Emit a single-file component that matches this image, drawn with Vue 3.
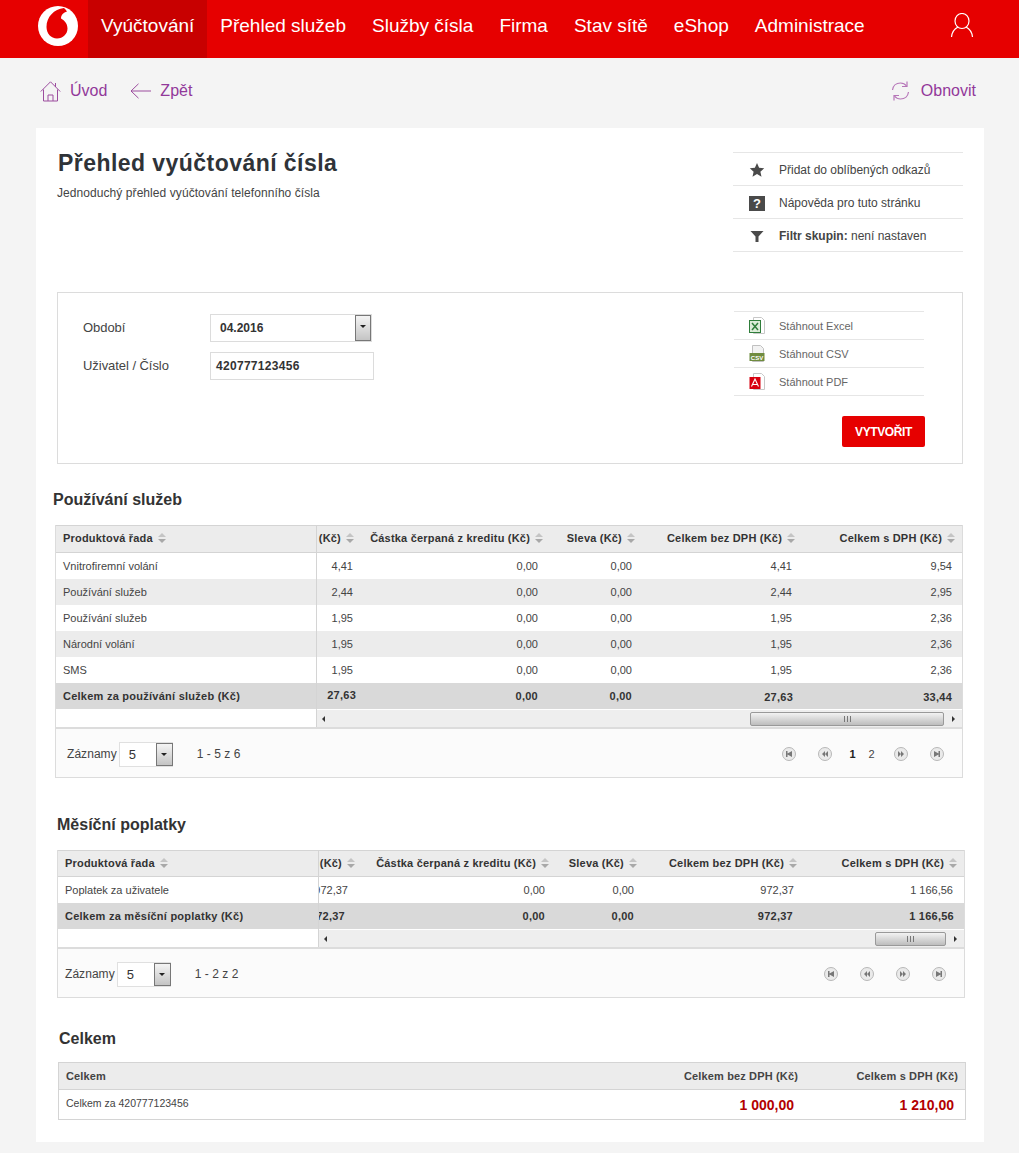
<template>
  <div class="page">
    <header class="topbar">
      <div class="logo">
        <svg width="42" height="42" viewBox="0 0 42 42">
          <circle cx="21" cy="21" r="20" fill="#fff" />
          <path d="M27 3C17 4 9.500 12 9.500 22c0 6.500 4.500 11.500 10.500 11.500S30.500 29 30.500 23.500c0-6-4.500-9-6.500-10 0-3.500 2.500-6 6-7-1-1.500-2-2.700-3-3.500z" fill="#e60000" />
        </svg>
      </div>
      <nav class="menu">
        <a v-for="item in menu" :key="item" class="menu-item" :class="{ active: item === 'Vyúčtování' }">{{ item }}</a>
      </nav>
      <svg class="user" width="24" height="26" viewBox="0 0 24 26" fill="none" stroke="#fff" stroke-width="1.2">
        <ellipse cx="12" cy="8" rx="7" ry="7.500" />
        <path d="M1.500 24c.5-5 3.500-8.500 6.500-10M22.500 24c-.5-5-3.500-8.500-6.500-10" />
      </svg>
    </header>

    <div class="toolbar">
      <a class="tool">
        <svg width="21" height="21" viewBox="0 0 21 21" fill="none" stroke="#9c4d9e" stroke-width="1">
          <path d="M.8 10.500 10.500 .8l9.700 9.700M3.500 8.500v11.500h14V8.500M15.500 2v4M8 20v-6h5v6" />
        </svg>
        Úvod
      </a>
      <a class="tool">
        <svg width="21" height="16" viewBox="0 0 21 16" fill="none" stroke="#9c4d9e" stroke-width="1">
          <path d="M8.500 .8 1 8l7.500 7.200M1 8h20" />
        </svg>
        Zpět
      </a>
      <a class="tool right">
        <svg width="19" height="20" viewBox="0 0 19 20" fill="none" stroke="#b676b8" stroke-width="1.200">
          <path d="M1.500 9C2 5 5 2 9.500 2c2.500 0 4.500 1 6 3M17.500 11c-.5 4-3.500 7-8 7-2.500 0-4.500-1-6-3" />
          <path d="M16 .5v5h-5M3 19.500v-5h5" />
        </svg>
        Obnovit
      </a>
    </div>

    <main class="card">
      <div class="head">
        <div>
          <h1>Přehled vyúčtování čísla</h1>
          <p class="sub">Jednoduchý přehled vyúčtování telefonního čísla</p>
        </div>
        <ul class="links">
          <li>
            <svg width="16" height="16" viewBox="0 0 16 16"><path d="M8 1l2.100 4.800 5.100.5-3.800 3.400 1.100 5.100L8 12.100l-4.500 2.700 1.100-5.100L.8 6.300l5.100-.5z" fill="#4a4a4a" /></svg>
            <span>Přidat do oblíbených odkazů</span>
          </li>
          <li>
            <span class="q">?</span>
            <span>Nápověda pro tuto stránku</span>
          </li>
          <li>
            <svg width="16" height="16" viewBox="0 0 16 16"><path d="M1.500 3h13L9.500 8.500V14h-3V8.500z" fill="#4a4a4a" /></svg>
            <span><b>Filtr skupin:</b> není nastaven</span>
          </li>
        </ul>
      </div>

      <section class="filter">
        <div class="fields">
          <div class="field">
            <label>Období</label>
            <div class="select period">
              <span>04.2016</span>
              <i class="drop"></i>
            </div>
          </div>
          <div class="field">
            <label>Uživatel / Číslo</label>
            <div class="input">420777123456</div>
          </div>
        </div>
        <div class="downloads">
          <ul>
            <li>
              <svg width="16" height="18" viewBox="0 0 16 18">
                <path d="M4.500 .5h8l3 3v13h-11z" fill="#fff" stroke="#c8c8c8" />
                <rect x=".5" y="3.500" width="11" height="12" fill="#dcecd8" stroke="#2f7d3a" />
                <path d="M3 6l6 7M9 6l-6 7" stroke="#2f7d3a" stroke-width="1.500" />
              </svg>
              <span>Stáhnout Excel</span>
            </li>
            <li>
              <svg width="16" height="18" viewBox="0 0 16 18">
                <path d="M3.500 .5h8l3 3v13h-11z" fill="#f2f2f2" stroke="#c0c0c0" />
                <rect x=".5" y="8" width="15" height="8" fill="#6f8b3f" />
                <text x="8" y="14.500" text-anchor="middle" class="mark">CSV</text>
              </svg>
              <span>Stáhnout CSV</span>
            </li>
            <li>
              <svg width="16" height="18" viewBox="0 0 16 18">
                <path d="M4.500 .5h8l3 3v13h-11z" fill="#fff" stroke="#c8c8c8" />
                <rect x=".5" y="4" width="11" height="12" fill="#d7000f" />
                <path d="M2.500 13.500 6 6l3.500 7.500M4 11.500h4" fill="none" stroke="#fff" stroke-width="1.100" />
              </svg>
              <span>Stáhnout PDF</span>
            </li>
          </ul>
          <button class="create">VYTVOŘIT</button>
        </div>
      </section>

      <h2 class="h-usage">Používání služeb</h2>
      <div class="grid-box usage">
        <div class="grid">
          <div class="frozen">
            <div class="row hdr"><span class="txt">Produktová řada</span><i class="sort"></i></div>
            <div v-for="(r, i) in usage" :key="i" class="row" :class="{ alt: i % 2 === 1 }">{{ r.name }}</div>
            <div class="row total">Celkem za používání služeb (Kč)</div>
            <div class="pad"></div>
          </div>
          <div class="scroll">
            <div class="row hdr">
              <div v-for="c in usageCols" :key="c.t" class="cell" :style="{ width: c.w + 'px', paddingRight: c.hp + 'px' }">
                <span class="txt">{{ c.t }}</span><i class="sort"></i>
              </div>
            </div>
            <div v-for="(r, i) in usage" :key="i" class="row" :class="{ alt: i % 2 === 1 }">
              <div v-for="(v, j) in r.vals" :key="j" class="cell" :style="{ width: usageCols[j].w + 'px', paddingRight: usageCols[j].vp + 'px' }">{{ v }}</div>
            </div>
            <div class="row total">
              <div v-for="(v, j) in usageTotal" :key="j" class="cell" :style="{ width: usageCols[j].w + 'px', paddingRight: usageCols[j].tp + 'px', marginTop: usageCols[j].ty + 'px' }">{{ v }}</div>
            </div>
            <div class="hbar">
              <i class="arr left"></i>
              <div class="track"><div class="thumb" style="width: 194px"><em></em></div></div>
              <i class="arr rgt"></i>
            </div>
          </div>
        </div>
        <div class="pager">
          <span class="lbl">Záznamy</span>
          <div class="select small"><span>5</span><i class="drop"></i></div>
          <span class="count">1 - 5 z 6</span>
          <div class="pages">
            <span class="pg first"></span>
            <span class="pg prev"></span>
            <span class="num cur">1</span>
            <span class="num">2</span>
            <span class="pg next"></span>
            <span class="pg last"></span>
          </div>
        </div>
      </div>

      <h2 class="h-fees">Měsíční poplatky</h2>
      <div class="grid-box fees">
        <div class="grid">
          <div class="frozen">
            <div class="row hdr"><span class="txt">Produktová řada</span><i class="sort"></i></div>
            <div class="row">Poplatek za uživatele</div>
            <div class="row total">Celkem za měsíční poplatky (Kč)</div>
            <div class="pad"></div>
          </div>
          <div class="scroll">
            <div class="row hdr">
              <div v-for="c in feeCols" :key="c.t" class="cell" :style="{ width: c.w + 'px', paddingRight: c.hp + 'px' }">
                <span class="txt">{{ c.t }}</span><i class="sort"></i>
              </div>
            </div>
            <div class="row">
              <div v-for="(v, j) in feeRow" :key="j" class="cell" :style="{ width: feeCols[j].w + 'px', paddingRight: feeCols[j].vp + 'px' }">{{ v }}</div>
            </div>
            <div class="row total">
              <div v-for="(v, j) in feeRow" :key="j" class="cell" :style="{ width: feeCols[j].w + 'px', paddingRight: feeCols[j].tp + 'px' }">{{ v }}</div>
            </div>
            <div class="hbar">
              <i class="arr left"></i>
              <div class="track"><div class="thumb" style="width: 71px"><em></em></div></div>
              <i class="arr rgt"></i>
            </div>
          </div>
        </div>
        <div class="pager">
          <span class="lbl">Záznamy</span>
          <div class="select small"><span>5</span><i class="drop"></i></div>
          <span class="count">1 - 2 z 2</span>
          <div class="pages">
            <span class="pg first"></span>
            <span class="pg prev"></span>
            <span class="pg next"></span>
            <span class="pg last"></span>
          </div>
        </div>
      </div>

      <h2 class="h-sum">Celkem</h2>
      <div class="sum">
        <div class="sum-row sum-hdr">
          <span class="s1">Celkem</span>
          <span class="s2">Celkem bez DPH (Kč)</span>
          <span class="s3">Celkem s DPH (Kč)</span>
        </div>
        <div class="sum-row sum-val">
          <span class="s1 name">Celkem za 420777123456</span>
          <span class="s2 price">1 000,00</span>
          <span class="s3 price">1 210,00</span>
        </div>
      </div>
    </main>
  </div>
</template>

<script setup>
const menu = ['Vyúčtování', 'Přehled služeb', 'Služby čísla', 'Firma', 'Stav sítě', 'eShop', 'Administrace']

const titles = ['(Kč)', 'Částka čerpaná z kreditu (Kč)', 'Sleva (Kč)', 'Celkem bez DPH (Kč)', 'Celkem s DPH (Kč)']

// šířky sloupců a odsazení hlavičky / hodnot / součtu
const usageCols = [
  { w: 46, hp: 8, vp: 10, tp: 7, ty: -2 },
  { w: 186, hp: 5, vp: 11, tp: 11, ty: 0 },
  { w: 94, hp: 7, vp: 11, tp: 11, ty: 0 },
  { w: 160, hp: 7, vp: 11, tp: 10, ty: 2 },
  { w: 160, hp: 7, vp: 11, tp: 11, ty: 2 }
].map((c, i) => ({ ...c, t: titles[i] }))

const feeCols = [
  { w: 40, hp: 3, vp: 11, tp: 14 },
  { w: 197, hp: 6, vp: 11, tp: 11 },
  { w: 89, hp: 7, vp: 11, tp: 11 },
  { w: 160, hp: 7, vp: 11, tp: 12 },
  { w: 159, hp: 6, vp: 11, tp: 10 }
].map((c, i) => ({ ...c, t: titles[i] }))

const usage = [
  { name: 'Vnitrofiremní volání', vals: ['4,41', '0,00', '0,00', '4,41', '9,54'] },
  { name: 'Používání služeb', vals: ['2,44', '0,00', '0,00', '2,44', '2,95'] },
  { name: 'Používání služeb', vals: ['1,95', '0,00', '0,00', '1,95', '2,36'] },
  { name: 'Národní volání', vals: ['1,95', '0,00', '0,00', '1,95', '2,36'] },
  { name: 'SMS', vals: ['1,95', '0,00', '0,00', '1,95', '2,36'] }
]
const usageTotal = ['27,63', '0,00', '0,00', '27,63', '33,44']
const feeRow = ['972,37', '0,00', '0,00', '972,37', '1 166,56']
</script>

<style>
body {
  background: #f4f4f4;
}
</style>

<style scoped>
.page {
  width: 1019px;
  height: 1153px;
  overflow: hidden;
  background: #f4f4f4;
  font-family: "Liberation Sans", Arial, sans-serif;
  color: #333;
}

/* horní lišta */
.topbar {
  height: 58px;
  background: #e60000;
  display: flex;
  align-items: center;
  position: relative;
}
.logo {
  width: 88px;
  padding-left: 37px;
  box-sizing: border-box;
  display: flex;
  margin-top: -6px;
}
.menu {
  display: flex;
  height: 58px;
}
.menu-item {
  padding: 0 13px;
  line-height: 51px;
  font-size: 19px;
  color: #fff;
}
.menu-item.active {
  background: #c80000;
}
.user {
  margin-left: auto;
  margin-right: 45px;
  margin-top: -7px;
}

/* nástroje */
.toolbar {
  height: 70px;
  display: flex;
  align-items: center;
  padding: 0 43px 4px 40px;
  box-sizing: border-box;
  gap: 23px;
}
.tool {
  display: flex;
  align-items: center;
  gap: 9px;
  color: #92399a;
  font-size: 16px;
}
.tool.right {
  margin-left: auto;
  gap: 11px;
}

.card {
  width: 948px;
  height: 1014px;
  margin-left: 36px;
  background: #fff;
  padding: 0 21px;
  box-sizing: border-box;
}

.head {
  display: flex;
  justify-content: space-between;
  padding-top: 23px;
  height: 164px;
  box-sizing: border-box;
}
h1 {
  margin: 0;
  padding-left: 1px;
  font-size: 23px;
  line-height: 24px;
  letter-spacing: 0.45px;
  color: #2f3338;
}
.sub {
  margin: 11px 0 0;
  font-size: 12px;
  letter-spacing: 0.07px;
  color: #444;
}
.links {
  list-style: none;
  margin: 1px 0 0;
  padding: 0;
  width: 230px;
  border-top: 1px solid #e6e6e6;
  height: 100px;
}
.links li {
  height: 33px;
  box-sizing: border-box;
  border-bottom: 1px solid #e6e6e6;
  display: flex;
  align-items: center;
  padding: 2px 0 0 16px;
  gap: 14px;
  font-size: 12px;
  color: #444;
}
.links svg {
  flex: none;
}
.q {
  width: 16px;
  height: 15px;
  background: #4a4a4a;
  color: #fff;
  font-weight: bold;
  font-size: 13px;
  line-height: 15px;
  text-align: center;
}

.filter {
  height: 172px;
  border: 1px solid #dcdcdc;
  box-sizing: border-box;
  display: flex;
  justify-content: space-between;
  padding: 20px 37px 0 25px;
}
.field {
  display: flex;
  align-items: center;
  height: 30px;
  margin-bottom: 8px;
  font-size: 12px;
  color: #444;
}
.field label {
  width: 127px;
  margin-top: -2px;
  font-size: 13px;
  letter-spacing: -0.05px;
}
.input {
  width: 164px;
  height: 28px;
  border: 1px solid #dcdcdc;
  box-sizing: border-box;
  padding-left: 5px;
  line-height: 26px;
  font-weight: bold;
  letter-spacing: 0.3px;
  color: #333;
}
.select {
  display: flex;
  align-items: center;
  border: 1px solid #dcdcdc;
  box-sizing: border-box;
  background: #fff;
  font-weight: bold;
  font-size: 12px;
  color: #333;
  position: relative;
}
.select span {
  flex: 1;
}
.period {
  width: 162px;
  height: 28px;
  padding-left: 9px;
}
.small {
  width: 54px;
  height: 25px;
  padding-left: 9px;
  border-color: #e0e0e0;
  font-weight: normal;
  font-size: 13px;
}
.drop {
  width: 17px;
  height: 100%;
  margin-right: -1px;
  border: 1px solid #777;
  box-sizing: border-box;
  background: linear-gradient(#f4f4f4, #c4c4c4);
  position: relative;
}
.period .drop {
  width: 16px;
  margin-right: 0;
}
.drop::after {
  content: "";
  position: absolute;
  left: 4px;
  top: 9px;
  border: 3.500px solid transparent;
  border-top-color: #222;
  border-bottom: 0;
}

.downloads {
  width: 191px;
  margin-top: -2px;
}
.downloads ul {
  list-style: none;
  margin: 0 1px 0 0;
  padding: 0;
  border-top: 1px solid #e6e6e6;
}
.downloads li {
  height: 28px;
  box-sizing: border-box;
  border-bottom: 1px solid #e6e6e6;
  display: flex;
  align-items: center;
  gap: 14px;
  padding-left: 15px;
  font-size: 11px;
  color: #666;
}
.mark {
  fill: #fff;
  font-size: 6px;
  font-weight: bold;
  font-family: "Liberation Sans", Arial, sans-serif;
}
.create {
  display: block;
  margin: 20px 0 0 auto;
  width: 83px;
  height: 31px;
  border: 0;
  border-radius: 2px;
  background: #e60000;
  color: #fff;
  font: bold 12px "Liberation Sans", Arial, sans-serif;
  letter-spacing: -0.4px;
  padding: 0;
}

h2 {
  margin: 0;
  font-size: 16px;
  line-height: 20px;
  color: #333;
}
.h-usage {
  margin: 26px 0 15px -4px;
}
.h-fees {
  margin: 37px 0 15px 0;
}
.h-sum {
  margin: 31px 0 13px 2px;
}

.grid-box {
  width: 908px;
  border: 1px solid #dcdcdc;
  border-top: 0;
  box-sizing: border-box;
}
.usage {
  margin-left: -2px;
}
.grid {
  display: flex;
  border-bottom: 2px solid #dcdcdc;
}
.frozen {
  width: 261px;
  flex: none;
  border-right: 1px solid #d4d4d4;
  box-sizing: border-box;
  font-size: 11px;
}
.scroll {
  flex: 1;
  min-width: 0;
  overflow: hidden;
  font-size: 11px;
}
.row {
  height: 26px;
  display: flex;
  align-items: center;
  color: #444;
  white-space: nowrap;
}
.frozen .row {
  padding-left: 7px;
}
.row.alt {
  background: #ececec;
}
.row.hdr {
  height: 28px;
  background: #ececec;
  border-top: 1px solid #d4d4d4;
  border-bottom: 1px solid #d4d4d4;
  padding-bottom: 2px;
  box-sizing: border-box;
  font-weight: bold;
  letter-spacing: 0.2px;
  color: #333;
}
.fees .row.hdr {
  height: 27px;
}
.row.total {
  background: #d9d9d9;
  font-weight: bold;
  letter-spacing: 0.25px;
  color: #333;
}
.cell {
  flex: none;
  display: flex;
  justify-content: flex-end;
  align-items: center;
  box-sizing: border-box;
  overflow: hidden;
}
.sort {
  flex: none;
  width: 9px;
  height: 10px;
  margin-left: 5px;
  position: relative;
}
.sort::before,
.sort::after {
  content: "";
  position: absolute;
  left: 0;
  border: 4.500px solid transparent;
}
.sort::before {
  top: 0;
  border-bottom-color: #c4c4c4;
  border-top: 0;
}
.sort::after {
  bottom: 0;
  border-top-color: #a8a8a8;
  border-bottom: 0;
}
.pad {
  height: 18px;
}
.hbar {
  height: 18px;
  background: #eeeeee;
  display: flex;
  align-items: center;
  border-top: 1px solid #fff;
  box-sizing: border-box;
}
.track {
  flex: 1;
  display: flex;
  justify-content: flex-end;
}
.thumb {
  height: 14px;
  box-sizing: border-box;
  border: 1px solid #999;
  border-radius: 2px;
  background: linear-gradient(#f2f2f2, #bdbdbd);
  display: flex;
  align-items: center;
  justify-content: center;
}
.thumb em {
  width: 7px;
  height: 6px;
  background: repeating-linear-gradient(90deg, #777 0 1px, transparent 1px 3px);
}
.arr {
  flex: none;
  width: 18px;
  height: 6px;
  position: relative;
}
.arr::after {
  content: "";
  position: absolute;
  top: 0;
  border: 3px solid transparent;
}
.arr.left::after {
  left: 5px;
  border-right-color: #333;
  border-left: 0;
}
.arr.rgt::after {
  left: 8px;
  border-left-color: #333;
  border-right: 0;
}

.pager {
  height: 48px;
  background: #fbfbfb;
  display: flex;
  align-items: center;
  padding: 2px 0 0 11px;
  box-sizing: border-box;
  font-size: 12px;
  letter-spacing: 0.05px;
  color: #444;
}
.fees .pager {
  padding-left: 7px;
}
.lbl {
  margin-right: 2px;
}
.count {
  margin-left: 24px;
}
.pages {
  margin-left: auto;
  display: flex;
  align-items: center;
  margin-right: 18px;
}
.pg {
  width: 14px;
  height: 14px;
  border-radius: 50%;
  border: 1px solid #b8b8b8;
  background: #eaeaea;
  box-sizing: border-box;
  position: relative;
  margin-left: 22px;
}
.pg.first {
  margin-left: 0;
}
.pg::after {
  content: "";
  position: absolute;
  left: 3px;
  top: 3px;
  width: 6px;
  height: 6px;
  background: #777;
}
.pg.first::after,
.pg.last::after {
  clip-path: polygon(0 0, 25% 0, 25% 40%, 100% 0, 100% 100%, 25% 60%, 25% 100%, 0 100%);
}
.pg.last::after {
  transform: scaleX(-1);
}
.pg.prev::after {
  clip-path: polygon(0 50%, 50% 0, 50% 50%, 100% 0, 100% 100%, 50% 50%, 50% 100%);
}
.pg.next::after {
  clip-path: polygon(0 0, 50% 50%, 50% 0, 100% 50%, 50% 100%, 50% 50%, 0 100%);
}
.num {
  font-size: 11px;
  width: 19px;
  text-align: center;
}
.num.cur {
  font-weight: bold;
  color: #222;
  margin-left: 11px;
}
.num + .pg {
  margin-left: 13px;
}

.sum {
  width: 908px;
  margin-left: 1px;
  border: 1px solid #d4d4d4;
  box-sizing: border-box;
}
.sum-row {
  display: flex;
  align-items: center;
  font-size: 11px;
}
.sum-hdr {
  height: 27px;
  background: #ececec;
  border-bottom: 1px solid #d4d4d4;
  box-sizing: border-box;
  font-weight: bold;
  letter-spacing: 0.15px;
  color: #444;
}
.sum-val {
  height: 29px;
}
.s1 {
  flex: 1;
  padding-left: 7px;
}
.s2 {
  width: 160px;
  text-align: right;
  padding-right: 7px;
  box-sizing: border-box;
}
.s3 {
  width: 160px;
  text-align: right;
  padding-right: 7px;
  box-sizing: border-box;
}
.name {
  font-size: 10.500px;
  color: #444;
  margin-top: -4px;
}
.price {
  font-size: 14px;
  font-weight: bold;
  color: #b30000;
}
.s2.price {
  padding-right: 11px;
}
.s3.price {
  padding-right: 11px;
}
</style>
